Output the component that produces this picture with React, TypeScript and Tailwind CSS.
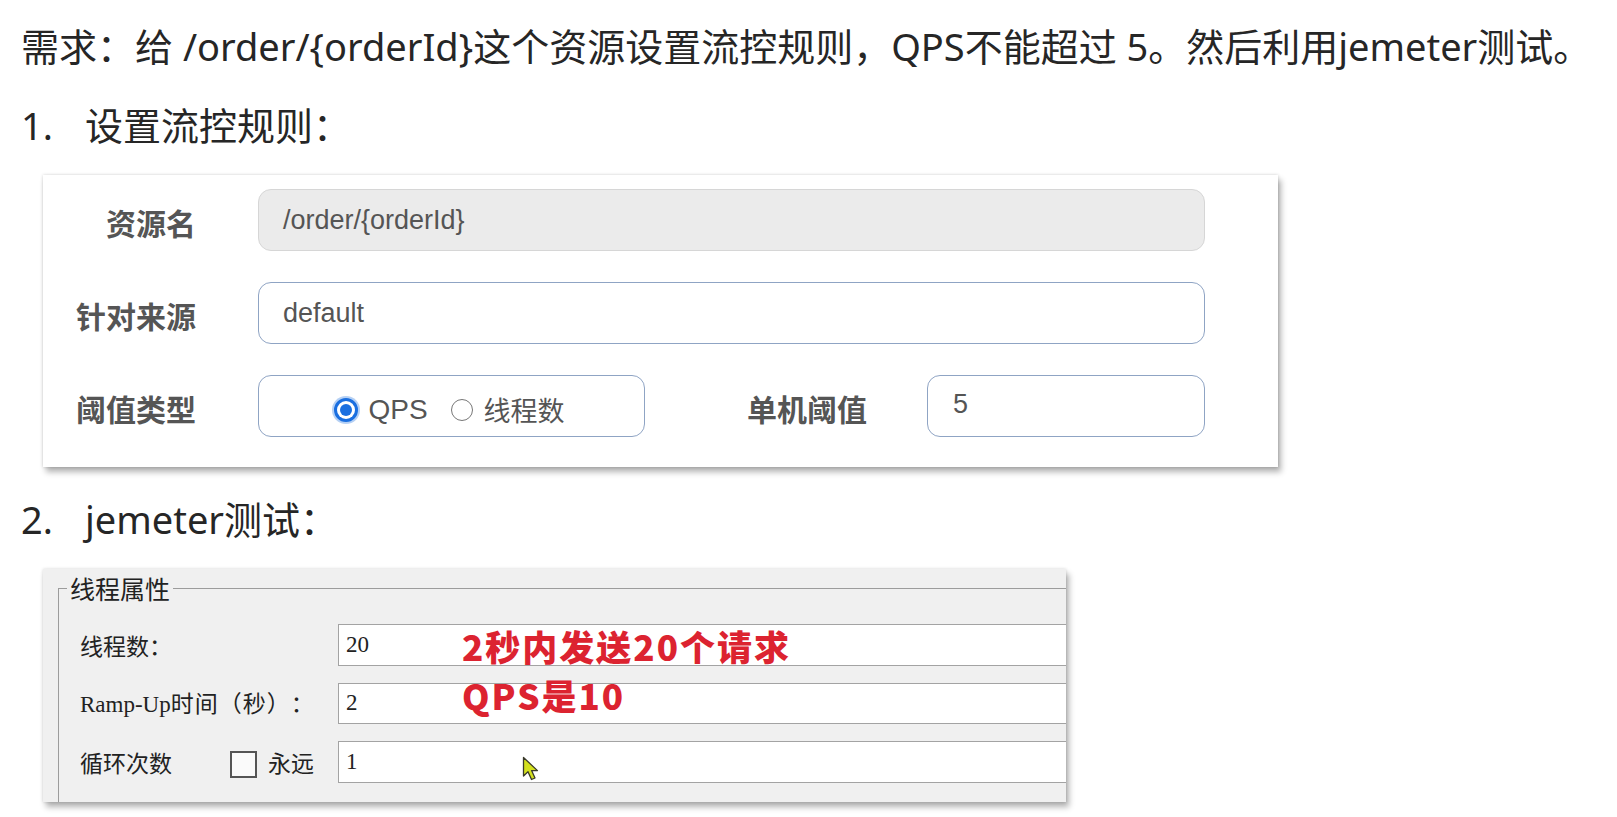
import React from "react";

function Cursor() {
  return (
    <svg width="20" height="26" viewBox="0 0 20 26" className="absolute left-[479px] top-[187px]">
      <path
        d="M1.5 1.5 L1.5 20 L6 15.8 L9.5 23.5 L13 22 L9.6 14.6 L15.5 14.6 Z"
        fill="#d3e01e"
        stroke="#3a3a2a"
        strokeWidth="1.3"
        strokeLinejoin="round"
      />
    </svg>
  );
}

export default function App() {
  return (
    <div className="w-[1617px] h-[817px] bg-white overflow-hidden pl-[21px] text-[#262626] [text-spacing-trim:space-all] font-['Noto_Sans','Noto_Sans_CJK_SC',sans-serif]">
      {/* Line 1 */}
      <div className="mt-[19px] h-[54px] leading-[54px] text-[38px] whitespace-nowrap">
        {"需求：给 /order/{orderId}这个资源设置流控规则，QPS不能超过 5。然后利用jemeter测试。"}
      </div>

      {/* Line 2 */}
      <div className="mt-[25px] h-[54px] leading-[54px] text-[38px] flex whitespace-nowrap">
        <span className="w-[64px]">1.</span>
        <span>设置流控规则：</span>
      </div>

      {/* Card 1 */}
      <div className="ml-[22px] mt-[23px] w-[1235px] h-[292px] bg-white shadow-[0_0_3px_rgba(0,0,0,0.18),3px_5px_6px_rgba(0,0,0,0.3)] pt-[14px] pr-[73px] flex flex-col gap-[31px] font-['Liberation_Sans','Noto_Sans_CJK_SC',sans-serif]">
        <div className="flex items-center h-[62px]">
          <div className="w-[153px] text-right pt-[10px] text-[30px] leading-[40px] font-bold text-[#555]">资源名</div>
          <div className="ml-[62px] flex-1 h-full rounded-[13px] bg-[#ebebeb] border-[1.5px] border-[#d6d6d6] flex items-center pl-[24px] text-[27px] text-[#555]">
            {"/order/{orderId}"}
          </div>
        </div>
        <div className="flex items-center h-[62px]">
          <div className="w-[153px] text-right pt-[10px] text-[30px] leading-[40px] font-bold text-[#555]">针对来源</div>
          <div className="ml-[62px] flex-1 h-full rounded-[13px] bg-white border-[1.5px] border-[#8fa4c4] flex items-center pl-[24px] text-[27px] text-[#555]">
            default
          </div>
        </div>
        <div className="flex items-center h-[62px]">
          <div className="w-[153px] text-right pt-[10px] text-[30px] leading-[40px] font-bold text-[#555]">阈值类型</div>
          <div className="ml-[62px] w-[387px] h-full rounded-[13px] bg-white border-[1.5px] border-[#8fa4c4] flex items-center justify-center pt-[8px] pr-[4px] text-[28px] text-[#555]">
            <span className="w-[24px] h-[24px] rounded-full bg-[#1a6fe0] border-[2px] border-[#1a6fe0] shadow-[0_0_0_2px_rgba(120,170,235,0.55)] flex items-center justify-center">
              <span className="w-[12px] h-[12px] rounded-full bg-[#1a6fe0] ring-[3px] ring-white"></span>
            </span>
            <span className="ml-[10px]">QPS</span>
            <span className="ml-[23px] w-[22px] h-[22px] rounded-full border-[1.5px] border-[#777] bg-white"></span>
            <span className="ml-[11px] font-['Noto_Sans_CJK_SC',sans-serif] text-[27px]">线程数</span>
          </div>
          <div className="ml-[102px] w-[120px] pt-[10px] text-[30px] leading-[40px] font-bold text-[#555] whitespace-nowrap">单机阈值</div>
          <div className="ml-[60px] flex-1 h-full rounded-[13px] bg-white border-[1.5px] border-[#8fa4c4] flex items-center pl-[25px] pb-[4px] text-[27px] text-[#555]">
            5
          </div>
        </div>
      </div>

      {/* Line 3 */}
      <div className="mt-[25px] h-[54px] leading-[54px] text-[38px] flex whitespace-nowrap">
        <span className="w-[64px]">2.</span>
        <span>jemeter测试：</span>
      </div>

      {/* Card 2: JMeter panel */}
      <div className="relative ml-[22px] mt-[23px] w-[1023px] h-[233px] bg-[#f0f0f0] overflow-hidden shadow-[0_0_3px_rgba(0,0,0,0.15),3px_5px_6px_rgba(0,0,0,0.3)] font-['Liberation_Serif','Noto_Sans_CJK_SC',serif] text-[23px] text-[#222]">
        <fieldset className="ml-[15px] mt-[4px] w-[1040px] h-[300px] border-t-[1.5px] border-l-[1.5px] border-[#9c9c9c]">
          <legend className="ml-[8px] px-[3px] text-[25px] leading-[30px] font-['Noto_Sans_CJK_SC',sans-serif] text-[#222]">线程属性</legend>
          <div className="flex flex-col gap-[17px] pt-[21px] pl-[21px]">
            <div className="flex items-center h-[42px]">
              <div className="w-[258px] font-['Noto_Sans_CJK_SC',sans-serif]">线程数：</div>
              <div className="flex-1 h-full bg-white border-[1.5px] border-[#a3a3a3] flex items-center pl-[7px]">20</div>
            </div>
            <div className="flex items-center h-[41px]">
              <div className="w-[258px] whitespace-nowrap">
                Ramp-Up<span className="font-['Noto_Sans_CJK_SC',sans-serif] tracking-[1px]">时间（秒）：</span>
              </div>
              <div className="flex-1 h-full bg-white border-[1.5px] border-[#a3a3a3] flex items-center pl-[7px]">2</div>
            </div>
            <div className="flex items-center h-[42px]">
              <div className="w-[258px] flex items-center font-['Noto_Sans_CJK_SC',sans-serif]">
                <span className="w-[150px]">循环次数</span>
                <span className="w-[27px] h-[27px] border-2 border-[#555] bg-[#fafafa] mt-[4px]"></span>
                <span className="ml-[11px]">永远</span>
              </div>
              <div className="flex-1 h-full bg-white border-[1.5px] border-[#a3a3a3] flex items-center pl-[7px]">1</div>
            </div>
          </div>
        </fieldset>

        {/* red annotations */}
        <div className="absolute left-[419px] top-[57px] text-[35px] leading-[40px] tracking-[2px] font-black text-[#dc2330] whitespace-nowrap font-['Noto_Sans_CJK_SC',sans-serif]">
          2秒内发送20个请求
        </div>
        <div className="absolute left-[419px] top-[106px] text-[35px] leading-[40px] tracking-[2px] font-black text-[#dc2330] whitespace-nowrap font-['Noto_Sans_CJK_SC',sans-serif]">
          QPS是10
        </div>
        <Cursor />
      </div>
    </div>
  );
}
